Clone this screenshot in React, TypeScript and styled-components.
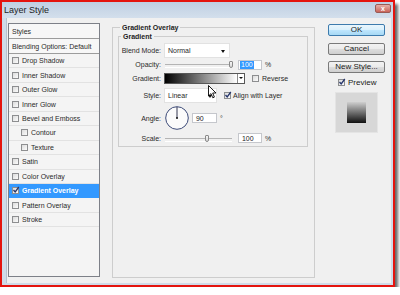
import React from "react";
import styled, { createGlobalStyle } from "styled-components";

const GlobalStyle = createGlobalStyle`
  html, body { margin: 0; padding: 0; background: #ffffff; }
  body { font-family: "Liberation Sans", Arial, sans-serif; }
  * { box-sizing: border-box; }
`;

const Window = styled.div`
  width: 395px;
  height: 287px;
  border: 2px solid #e4140e;
  box-shadow: 3px 4px 3px rgba(0, 0, 0, 0.6);
  display: flex;
  flex-direction: column;
  background: #cfdbe8;
`;

const TitleBar = styled.div`
  height: 16px;
  flex: none;
  display: flex;
  align-items: center;
  justify-content: space-between;
  padding: 0 2px 0 2px;
  background: linear-gradient(#bfcfe2, #d3dfec);
  font-size: 9px;
  color: #1e1e1e;
`;

const Close = styled.div`
  align-self: flex-start;
  margin-top: 2px;
  width: 16px;
  height: 9px;
  border: 1px solid #9a5a54;
  border-radius: 2px;
  background: linear-gradient(#e6b0a8, #c9645a);
  color: #fff;
  font-size: 7px;
  font-weight: bold;
  line-height: 7px;
  text-align: center;
`;

const Frame = styled.div`
  flex: 1;
  display: flex;
  padding: 0 2px 2px 4px;
`;

const Content = styled.div`
  flex: 1;
  display: flex;
  align-items: flex-start;
  background: #f0f0f0;
  border-left: 1px solid #b7c2cf;
  padding: 5px 0 0 1px;
`;

const List = styled.div`
  width: 92px;
  height: 254px;
  flex: none;
  border: 1px solid #7d8088;
  background: #f4f4f4;
  display: flex;
  flex-direction: column;
`;

const ListHead = styled.div`
  height: 15px;
  flex: none;
  border-bottom: 1px solid #9c9c9c;
  display: flex;
  align-items: center;
  padding-left: 3px;
  font-size: 7px;
  color: #2a2a2a;
  background: #f7f7f7;
`;

const Item = styled.div<{ $indent?: boolean; $selected?: boolean }>`
  height: 14.45px;
  flex: none;
  border-bottom: 1px solid ${(p) => (p.$selected ? "#3399ff" : "#e2e2e2")};
  display: flex;
  align-items: center;
  padding-left: ${(p) => (p.$indent ? "12px" : "3px")};
  font-size: 7px;
  color: ${(p) => (p.$selected ? "#ffffff" : "#2a2a2a")};
  font-weight: ${(p) => (p.$selected ? "bold" : "normal")};
  background: ${(p) => (p.$selected ? "#3399ff" : "transparent")};
`;

const Box = styled.span<{ $gap?: number }>`
  width: 7px;
  height: 7px;
  flex: none;
  border: 1px solid #8d8e90;
  background: linear-gradient(135deg, #dcdcdc, #fbfbfb);
  margin-right: ${(p) => p.$gap ?? 3}px;
  position: relative;
  display: inline-block;
`;

const Tick = styled.svg`
  position: absolute;
  left: -1px;
  top: -2px;
`;

function Check({ checked, gap }: { checked?: boolean; gap?: number }) {
  return (
    <Box $gap={gap}>
      {checked && (
        <Tick width="8" height="8" viewBox="0 0 8 8">
          <path d="M1.5 4 L3.2 6 L6.8 1" fill="none" stroke="#26356b" strokeWidth="1.3" />
        </Tick>
      )}
    </Box>
  );
}

const Group = styled.fieldset`
  margin: -0.5px 0 0 12px;
  width: 203px;
  height: 255.5px;
  flex: none;
  border: 1px solid #cdcdcd;
  padding: 0 5px 0 5px;
  min-width: 0;
`;

const InnerGroup = styled.fieldset`
  margin: 0;
  width: 190px;
  border: 1px solid #cdcdcd;
  padding: 0 0 3px 0;
  min-width: 0;
`;

const Legend = styled.legend`
  font-size: 7px;
  line-height: 9px;
  font-weight: bold;
  color: #232323;
  padding: 0 2px;
  margin-left: 2px;
`;

const Row = styled.div<{ $h: number; $mt: number }>`
  display: flex;
  align-items: center;
  height: ${(p) => p.$h}px;
  margin-top: ${(p) => p.$mt}px;
  font-size: 7px;
  color: #2a2a2a;
`;

const Label = styled.span`
  width: 42px;
  flex: none;
  text-align: right;
  margin-right: 3px;
`;

const Select = styled.div<{ $w: number }>`
  width: ${(p) => p.$w}px;
  height: 15px;
  flex: none;
  background: #ffffff;
  border: 1px solid #e2e2e2;
  display: flex;
  align-items: center;
  padding-left: 3px;
  position: relative;
  &::after {
    content: "";
    position: absolute;
    right: 4px;
    top: 6px;
    border-left: 2.5px solid transparent;
    border-right: 2.5px solid transparent;
    border-top: 3px solid #111;
  }
`;

const Slider = styled.div`
  width: 67px;
  height: 11px;
  flex: none;
  margin-left: 1px;
  position: relative;
  &::before {
    content: "";
    position: absolute;
    left: 0;
    right: 0;
    top: 5px;
    height: 2px;
    border-top: 1px solid #b4b4b4;
    border-bottom: 1px solid #ffffff;
  }
`;

const Thumb = styled.span`
  position: absolute;
  top: 2px;
  width: 4px;
  height: 7px;
  border: 1px solid #8a8a8a;
  border-radius: 1px 1px 2px 2px;
  background: linear-gradient(#f6f6f6, #d8d8d8);
`;

const Input = styled.div<{ $w: number; $ml: number }>`
  width: ${(p) => p.$w}px;
  height: 10px;
  flex: none;
  margin-left: ${(p) => p.$ml}px;
  background: #ffffff;
  border: 1px solid #c5c7cc;
  display: flex;
  align-items: center;
  padding-left: 1px;
  font-size: 7px;
  color: #222;
`;

const Highlight = styled.span`
  background: #3399ff;
  color: #ffffff;
  padding: 0 1px;
  line-height: 8px;
`;

const Unit = styled.span<{ $ml: number }>`
  margin-left: ${(p) => p.$ml}px;
  font-size: 7px;
  color: #333;
`;

const GradBar = styled.div`
  width: 81px;
  height: 11px;
  flex: none;
  border: 1px solid #575757;
  display: flex;
`;

const GradFill = styled.div`
  flex: 1;
  background: linear-gradient(to right, #000000, #ffffff);
`;

const GradBtn = styled.div`
  width: 7px;
  background: #ffffff;
  border-left: 1px solid #8a8a8a;
  position: relative;
  &::after {
    content: "";
    position: absolute;
    left: 1px;
    top: 3px;
    border-left: 2px solid transparent;
    border-right: 2px solid transparent;
    border-top: 2.5px solid #111;
  }
`;

const CheckLabel = styled.span<{ $ml: number }>`
  display: flex;
  align-items: center;
  margin-left: ${(p) => p.$ml}px;
`;

const Dial = styled.svg`
  flex: none;
  margin-left: 1px;
`;

const Cursor = styled.svg`
  position: absolute;
  left: 43px;
  top: -4px;
`;

const Side = styled.div`
  margin: 1px 0 0 13px;
  width: 57px;
  flex: none;
  display: flex;
  flex-direction: column;
`;

const Button = styled.div<{ $primary?: boolean; $mt: number }>`
  height: 12px;
  margin-top: ${(p) => p.$mt}px;
  border: 1px solid ${(p) => (p.$primary ? "#3d7bad" : "#7a7a7a")};
  border-radius: 2px;
  background: ${(p) =>
    p.$primary
      ? "linear-gradient(#eaf6fd 0%, #d9f0fc 50%, #bee6fd 51%, #a7d9f5 100%)"
      : "linear-gradient(#f2f2f2 0%, #ebebeb 50%, #dddddd 51%, #cfcfcf 100%)"};
  font-size: 8px;
  line-height: 10px;
  text-align: center;
  color: #1a1a1a;
`;

const PreviewRow = styled.div`
  margin-top: 5px;
  height: 8px;
  padding-left: 10px;
  display: flex;
  align-items: center;
  font-size: 8px;
  color: #1a1a1a;
`;

const PreviewBox = styled.div`
  margin: 6px 0 0 7px;
  width: 43px;
  height: 41px;
  background: #d7d7d7;
  border: 1px solid #e4e4e4;
  display: flex;
  align-items: center;
  justify-content: center;
`;

const Swatch = styled.div`
  width: 19px;
  height: 21px;
  margin-left: -1px;
  background: linear-gradient(#cfcfcf, #101010);
`;

const items: { name: string; indent?: boolean; checked?: boolean; selected?: boolean }[] = [
  { name: "Drop Shadow" },
  { name: "Inner Shadow" },
  { name: "Outer Glow" },
  { name: "Inner Glow" },
  { name: "Bevel and Emboss" },
  { name: "Contour", indent: true },
  { name: "Texture", indent: true },
  { name: "Satin" },
  { name: "Color Overlay" },
  { name: "Gradient Overlay", checked: true, selected: true },
  { name: "Pattern Overlay" },
  { name: "Stroke" },
];

export default function App() {
  return (
    <>
      <GlobalStyle />
      <Window>
        <TitleBar>
          <span>Layer Style</span>
          <Close>x</Close>
        </TitleBar>
        <Frame>
          <Content>
            <List>
              <ListHead>Styles</ListHead>
              <ListHead>Blending Options: Default</ListHead>
              {items.map((it) => (
                <Item key={it.name} $indent={it.indent} $selected={it.selected}>
                  <Check checked={it.checked} />
                  {it.name}
                </Item>
              ))}
            </List>

            <Group>
              <Legend>Gradient Overlay</Legend>
              <InnerGroup>
                <Legend>Gradient</Legend>
                <Row $h={15} $mt={2.5}>
                  <Label>Blend Mode:</Label>
                  <Select $w={66}>Normal</Select>
                </Row>
                <Row $h={11} $mt={1}>
                  <Label>Opacity:</Label>
                  <Slider>
                    <Thumb style={{ left: 64 }} />
                  </Slider>
                  <Input $w={24} $ml={6}>
                    <Highlight>100</Highlight>
                  </Input>
                  <Unit $ml={3}>%</Unit>
                </Row>
                <Row $h={11} $mt={3}>
                  <Label>Gradient:</Label>
                  <GradBar>
                    <GradFill />
                    <GradBtn />
                  </GradBar>
                  <CheckLabel $ml={7}>
                    <Check />
                    Reverse
                  </CheckLabel>
                </Row>
                <Row $h={15} $mt={4}>
                  <Label>Style:</Label>
                  <Select $w={53}>
                    Linear
                    <Cursor width="9" height="14" viewBox="0 0 9 14">
                      <path
                        d="M0.5 0.5 L0.5 11 L3 8.6 L4.8 12.8 L6.4 12.1 L4.7 8 L8 8 Z"
                        fill="#ffffff"
                        stroke="#000000"
                        strokeWidth="0.9"
                      />
                    </Cursor>
                  </Select>
                  <CheckLabel $ml={7}>
                    <Check checked gap={2} />
                    Align with Layer
                  </CheckLabel>
                </Row>
                <Row $h={24} $mt={3}>
                  <Label>Angle:</Label>
                  <Dial width="24" height="24" viewBox="0 0 24 24">
                    <circle cx="12" cy="12" r="11.3" fill="#fbfbfb" stroke="#3d4b78" strokeWidth="1" />
                    <line x1="12" y1="12" x2="12" y2="1" stroke="#1d2340" strokeWidth="0.9" />
                    <circle cx="12" cy="12" r="1" fill="#111" />
                  </Dial>
                  <Input $w={25} $ml={3}>
                    &nbsp;90
                  </Input>
                  <Unit $ml={3}>°</Unit>
                </Row>
                <Row $h={10} $mt={3}>
                  <Label>Scale:</Label>
                  <Slider>
                    <Thumb style={{ left: 40 }} />
                  </Slider>
                  <Input $w={24} $ml={6}>
                    &nbsp;100
                  </Input>
                  <Unit $ml={3}>%</Unit>
                </Row>
              </InnerGroup>
            </Group>

            <Side>
              <Button $primary $mt={0}>OK</Button>
              <Button $mt={7}>Cancel</Button>
              <Button $mt={6}>New Style...</Button>
              <PreviewRow>
                <Check checked gap={3} />
                Preview
              </PreviewRow>
              <PreviewBox>
                <Swatch />
              </PreviewBox>
            </Side>
          </Content>
        </Frame>
      </Window>
    </>
  );
}
